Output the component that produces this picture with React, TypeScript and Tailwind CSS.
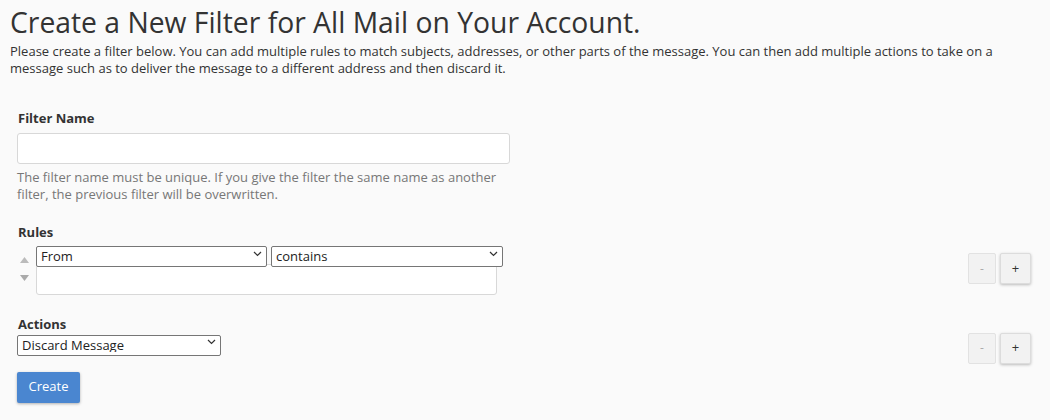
import { ReactNode } from 'react';

function Chevron() {
  return (
    <svg
      width="9"
      height="6"
      viewBox="0 0 9 6"
      className="pointer-events-none absolute right-[5px] top-1/2 -translate-y-1/2"
    >
      <path d="M1 1l3.5 3.5L8 1" fill="none" stroke="#333" strokeWidth="1.2" />
    </svg>
  );
}

function FakeSelect({ value, className }: { value: string; className: string }) {
  return (
    <div className={`relative ${className}`}>
      <select
        defaultValue={value}
        className="h-full w-full appearance-none rounded-[2px] border border-[#767676] bg-white pl-[4px] pr-5 text-[13px] leading-none text-[#222] outline-none"
      >
        <option>{value}</option>
      </select>
      <Chevron />
    </div>
  );
}

function PlusMinus() {
  return (
    <div className="flex gap-[4px]">
      <button
        type="button"
        className="h-[31px] w-[28px] rounded-[2px] border border-[#e2e2e2] bg-[#f2f2f2] text-[12px] text-[#aaa]"
      >
        -
      </button>
      <button
        type="button"
        className="h-[31px] w-[31px] rounded-[2px] border border-[#dcdcdc] bg-[#f2f2f2] text-[13px] text-[#333] shadow-[0_1px_3px_rgba(0,0,0,0.25)]"
      >
        +
      </button>
    </div>
  );
}

function Label({ children }: { children: ReactNode }) {
  return <p className="text-[13px] font-bold text-[#333]">{children}</p>;
}

export default function App() {
  return (
    <div
      className="h-[420px] w-[1050px] overflow-hidden bg-[#fafafa] text-[#333]"
      style={{ fontFamily: '"Open Sans", sans-serif' }}
    >
      <div className="px-[10px] pt-[2px]">
        <h1 className="text-[28.3px] leading-[40px] text-[#333]">
          Create a New Filter for All Mail on Your Account.
        </h1>
        <p className="mt-[1px] text-[13px] leading-[17px]">
          Please create a filter below. You can add multiple rules to match subjects, addresses, or other parts of the
          message. You can then add multiple actions to take on a message such as to deliver the message to a different
          address and then discard it.
        </p>
      </div>

      <div className="mr-[19px] ml-[17px] mt-[32px]">
        <div className="pl-[1px]">
          <Label>Filter Name</Label>
        </div>
        <input
          type="text"
          className="mt-[4px] block h-[31px] w-[493px] rounded-[3px] border border-[#d8d8d8] bg-white outline-none"
        />
        <p className="mt-[5px] w-[493px] text-[13px] leading-[17px] text-[#777]">
          The filter name must be unique. If you give the filter the same name as another filter, the previous filter
          will be overwritten.
        </p>

        <div className="mt-[20px] pl-[1px]">
          <Label>Rules</Label>
        </div>
        <div className="flex items-start justify-between">
          <div className="flex items-start">
            <div className="flex w-[19px] flex-col items-start pl-[3px] pt-[15px]">
              <svg width="9" height="6" viewBox="0 0 9 6">
                <path d="M0 6L4.5 0L9 6Z" fill="#bbb" />
              </svg>
              <svg width="9" height="6" viewBox="0 0 9 6" className="mt-[12px]">
                <path d="M0 0L9 0L4.5 6Z" fill="#aaa" />
              </svg>
            </div>
            <div className="pt-[1px]">
              <div className="flex gap-[4px]">
                <FakeSelect value="From" className="h-[21px] w-[231px]" />
                <FakeSelect value="contains" className="h-[21px] w-[232px]" />
              </div>
              <input
                type="text"
                className="block h-[31px] w-[461px] rounded-[3px] border border-[#d8d8d8] bg-white outline-none"
              />
            </div>
          </div>
          <div className="pt-[11px]">
            <PlusMinus />
          </div>
        </div>

        <div className="mt-[20px] pl-[1px]">
          <Label>Actions</Label>
        </div>
        <div className="-mt-[2px] flex items-start justify-between">
          <FakeSelect value="Discard Message" className="-mt-[1px] h-[21px] w-[204px]" />
          <PlusMinus />
        </div>

        <button
          type="button"
          className="mt-[8px] h-[31px] w-[63px] rounded-[2px] bg-[#4a86d0] text-[13px] text-white shadow-[0_1px_3px_rgba(0,0,0,0.3)]"
        >
          Create
        </button>
      </div>
    </div>
  );
}
